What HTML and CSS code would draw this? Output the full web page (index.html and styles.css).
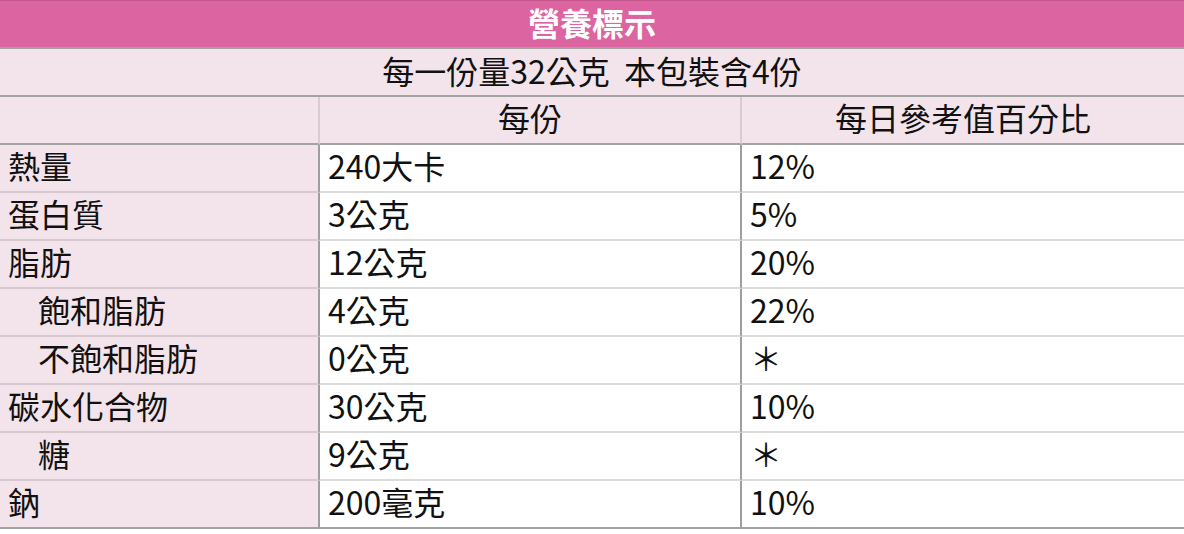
FILE: index.html
```html
<!DOCTYPE html>
<html lang="zh-Hant">
<head>
<meta charset="utf-8">
<title>營養標示</title>
<link rel="stylesheet" href="styles.css">
</head>
<body>
<div class="label">
  <div class="title">營養標示</div>
  <div class="serving">每一份量32公克&nbsp; 本包裝含4份</div>
  <div class="row head">
    <div class="c name"></div>
    <div class="c val center">每份</div>
    <div class="c pct center">每日參考值百分比</div>
  </div>
  <div class="row">
    <div class="c name">熱量</div>
    <div class="c val">240大卡</div>
    <div class="c pct">12%</div>
  </div>
  <div class="row">
    <div class="c name">蛋白質</div>
    <div class="c val">3公克</div>
    <div class="c pct">5%</div>
  </div>
  <div class="row">
    <div class="c name">脂肪</div>
    <div class="c val">12公克</div>
    <div class="c pct">20%</div>
  </div>
  <div class="row">
    <div class="c name sub">飽和脂肪</div>
    <div class="c val">4公克</div>
    <div class="c pct">22%</div>
  </div>
  <div class="row">
    <div class="c name sub">不飽和脂肪</div>
    <div class="c val">0公克</div>
    <div class="c pct">＊</div>
  </div>
  <div class="row">
    <div class="c name">碳水化合物</div>
    <div class="c val">30公克</div>
    <div class="c pct">10%</div>
  </div>
  <div class="row">
    <div class="c name sub">糖</div>
    <div class="c val">9公克</div>
    <div class="c pct">＊</div>
  </div>
  <div class="row last">
    <div class="c name">鈉</div>
    <div class="c val">200毫克</div>
    <div class="c pct">10%</div>
  </div>
</div>
</body>
</html>
```

FILE: styles.css
```css
html, body {
  margin: 0;
  padding: 0;
  background: #ffffff;
}
body {
  font-family: "Noto Sans CJK TC", "Noto Sans", sans-serif;
  font-size: 32px;
  color: #111111;
}
.label {
  width: 1184px;
}
.title {
  height: 46px;
  line-height: 42px;
  border-top: 1px solid #c4568c;
  border-bottom: 2px solid #a3a3a3;
  background: #dc64a0;
  color: #ffffff;
  font-weight: bold;
  font-size: 32px;
  text-align: center;
}
.serving {
  height: 46px;
  line-height: 42px;
  background: #f3e4eb;
  border-bottom: 2px solid #a3a3a3;
  text-align: center;
}
.row {
  display: grid;
  grid-template-columns: 320px 422px 1fr;
  height: 48px;
}
.c {
  box-sizing: border-box;
  height: 48px;
  line-height: 41px;
  padding-left: 8px;
  border-bottom: 2px solid #dcdcdc;
  white-space: nowrap;
}
.name {
  background: #f3e4eb;
  border-bottom-color: #d8c8d0;
  border-right: 2px solid #9e9e9e;
}
.val {
  border-right: 2px solid #9e9e9e;
}
.sub {
  padding-left: 38px;
}
.head .c {
  background: #f3e4eb;
  border-bottom: 2px solid #a3a3a3;
  border-right-color: #d8ccd2;
}
.head .pct {
  border-right: none;
}
.center {
  text-align: center;
  padding-left: 0;
}
.last .c {
  border-bottom: 2px solid #a3a3a3;
}
```
